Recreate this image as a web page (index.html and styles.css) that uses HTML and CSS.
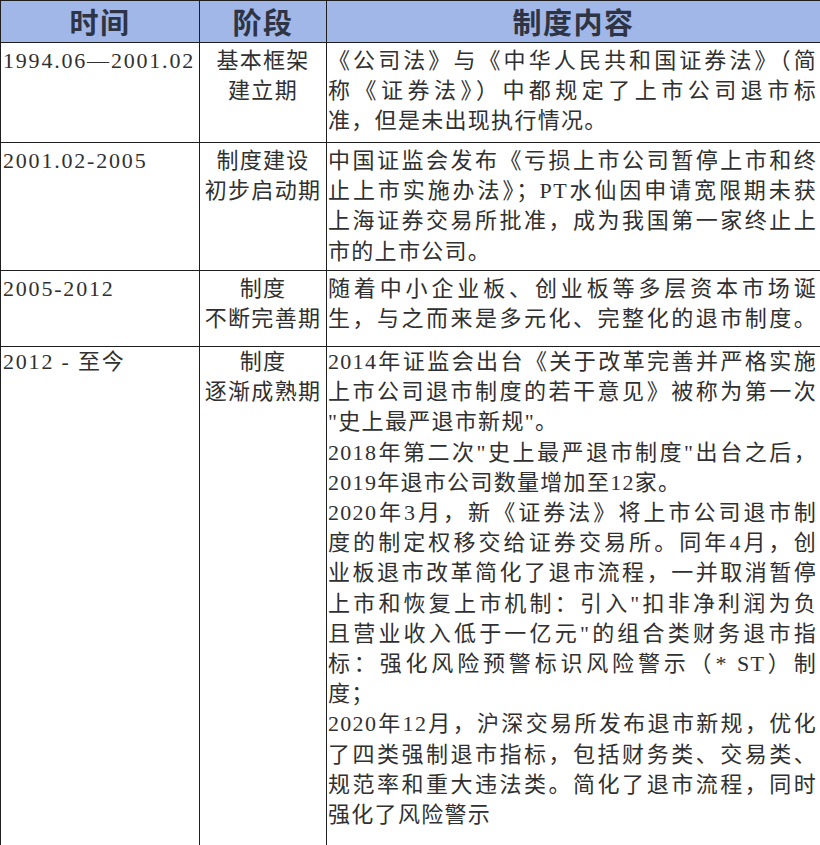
FILE: index.html
```html
<!DOCTYPE html>
<html lang="zh-CN">
<head>
<meta charset="utf-8">
<title>退市制度沿革</title>
<link rel="stylesheet" href="styles.css">
</head>
<body>
<div class="sheet">
  <div class="cell head">时间</div>
  <div class="cell head">阶段</div>
  <div class="cell head">制度内容</div>

  <div class="cell period">1994.06—2001.02</div>
  <div class="cell stage">基本框架<br>建立期</div>
  <div class="cell detail">
    <span class="ln">《公司法》与《中华人民共和国证券法》（简</span>
    <span class="ln">称《证券法》）中都规定了上市公司退市标</span>
    <span class="ln end">准，但是未出现执行情况。</span>
  </div>

  <div class="cell period">2001.02-2005</div>
  <div class="cell stage">制度建设<br>初步启动期</div>
  <div class="cell detail">
    <span class="ln">中国证监会发布《亏损上市公司暂停上市和终</span>
    <span class="ln">止上市实施办法》；PT水仙因申请宽限期未获</span>
    <span class="ln">上海证券交易所批准，成为我国第一家终止上</span>
    <span class="ln end">市的上市公司。</span>
  </div>

  <div class="cell period">2005-2012</div>
  <div class="cell stage">制度<br>不断完善期</div>
  <div class="cell detail">
    <span class="ln">随着中小企业板、创业板等多层资本市场诞</span>
    <span class="ln">生，与之而来是多元化、完整化的退市制度。</span>
  </div>

  <div class="cell period last">2012 - 至今</div>
  <div class="cell stage last">制度<br>逐渐成熟期</div>
  <div class="cell detail last">
    <span class="ln">2014年证监会出台《关于改革完善并严格实施</span>
    <span class="ln">上市公司退市制度的若干意见》被称为第一次</span>
    <span class="ln end">"史上最严退市新规"。</span>
    <span class="ln">2018年第二次"史上最严退市制度"出台之后，</span>
    <span class="ln end">2019年退市公司数量增加至12家。</span>
    <span class="ln">2020年3月，新《证券法》将上市公司退市制</span>
    <span class="ln">度的制定权移交给证券交易所。同年4月，创</span>
    <span class="ln">业板退市改革简化了退市流程，一并取消暂停</span>
    <span class="ln">上市和恢复上市机制：引入"扣非净利润为负</span>
    <span class="ln">且营业收入低于一亿元"的组合类财务退市指</span>
    <span class="ln">标：强化风险预警标识风险警示（* ST）制</span>
    <span class="ln end">度；</span>
    <span class="ln">2020年12月，沪深交易所发布退市新规，优化</span>
    <span class="ln">了四类强制退市指标，包括财务类、交易类、</span>
    <span class="ln">规范率和重大违法类。简化了退市流程，同时</span>
    <span class="ln end">强化了风险警示</span>
  </div>
</div>
</body>
</html>
```

FILE: styles.css
```css
html, body {
  margin: 0;
  padding: 0;
  background: #ffffff;
}

body {
  font-family: "Liberation Serif", "Noto Sans CJK SC", serif;
  color: #303030;
}

.sheet {
  display: grid;
  grid-template-columns: 199px 127px 494px;
  grid-template-rows: 42px 100px 128px 76px 520px;
  width: 820px;
  box-sizing: border-box;
  border-top: 1px solid #1e1e1e;
  border-left: 1px solid #1e1e1e;
}

.cell {
  box-sizing: border-box;
  border-right: 1px solid #1e1e1e;
  border-bottom: 1px solid #1e1e1e;
  font-size: 22px;
  line-height: 30.2px;
  letter-spacing: 1.3px;
  padding-top: 3px;
}

.cell.last {
  padding-top: 0;
}

.head {
  background: #a1b7e8;
  font-family: "Noto Sans CJK SC", sans-serif;
  font-size: 29px;
  font-weight: 700;
  line-height: 41px;
  letter-spacing: 1.5px;
  color: #2e3444;
  text-align: center;
  padding-top: 0;
}

.period {
  padding-left: 2px;
  letter-spacing: 1.8px;
  white-space: nowrap;
}

.stage {
  text-align: center;
}

.detail {
  padding-left: 1px;
  padding-right: 3px;
}

.ln {
  display: block;
  white-space: nowrap;
  text-align: justify;
  text-align-last: justify;
}

.ln.end {
  text-align-last: left;
}
```
